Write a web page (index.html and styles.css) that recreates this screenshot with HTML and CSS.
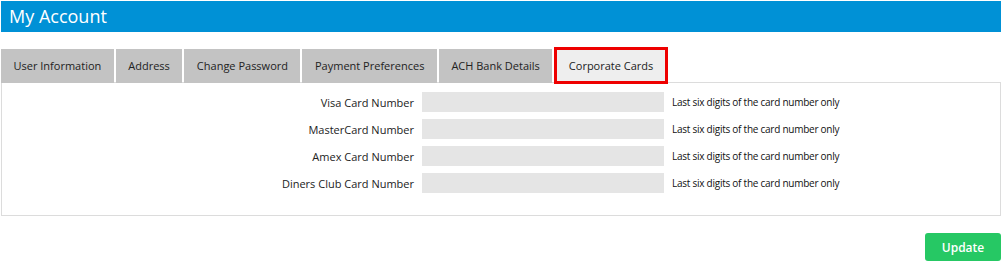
FILE: index.html
```html
<!DOCTYPE html>
<html lang="en">
<head>
<meta charset="UTF-8" />
<title>My Account</title>
<link rel="stylesheet" href="styles.css">
</head>
<body>
<div class="page">
  <div class="header">My Account</div>
  <div class="tabs">
    <div class="tab">User Information</div>
    <div class="tab">Address</div>
    <div class="tab">Change Password</div>
    <div class="tab">Payment Preferences</div>
    <div class="tab">ACH Bank Details</div>
    <div class="tab active">Corporate Cards</div>
  </div>
  <div class="panel">
    <div class="row">
      <label>Visa Card Number</label>
      <input type="text">
      <span class="hint">Last six digits of the card number only</span>
    </div>
    <div class="row">
      <label>MasterCard Number</label>
      <input type="text">
      <span class="hint">Last six digits of the card number only</span>
    </div>
    <div class="row">
      <label>Amex Card Number</label>
      <input type="text">
      <span class="hint">Last six digits of the card number only</span>
    </div>
    <div class="row">
      <label>Diners Club Card Number</label>
      <input type="text">
      <span class="hint">Last six digits of the card number only</span>
    </div>
  </div>
  <div class="actions">
    <button class="update">Update</button>
  </div>
</div>
</body>
</html>
```

FILE: styles.css
```css
body { margin:0; font-family:'Open Sans','Noto Sans',sans-serif; color:#222; background:#fff; }
.page { width:1000px; margin:1px 0 0 1px; }
.header { background:#0091d6; color:#fff; height:31px; line-height:30px; padding-left:8px; font-size:18px; }
.tabs { display:flex; align-items:flex-end; gap:2px; margin-top:14px; height:37px; position:relative; z-index:1; }
.tab { background:#c3c3c3; height:34px; line-height:34px; padding:0 12.5px; font-size:11px; color:#222; }
.tab.active { background:#eeeeee; height:31px; line-height:31px; border:3px solid #ee0000; padding:0 11.5px; margin-bottom:-1px; }
.panel { border:1px solid #dcdcdc; margin-top:-1px; padding:9px 0 22px; display:flex; flex-direction:column; gap:7px; }
.row { display:flex; align-items:center; height:20px; }
.row label { width:412px; text-align:right; font-size:11px; color:#222; }
.row input { margin:0 0 0 8px; width:242px; height:20px; box-sizing:border-box; border:none; background:#e5e5e5; padding:0; }
.hint { margin-left:8px; font-size:10px; color:#111; letter-spacing:-0.25px; }
.actions { display:flex; justify-content:flex-end; margin-top:17px; }
.update { background:#26c864; color:#fff; border:none; border-radius:3px; width:76px; height:28px; font-family:inherit; font-size:12px; font-weight:600; cursor:pointer; }
```
